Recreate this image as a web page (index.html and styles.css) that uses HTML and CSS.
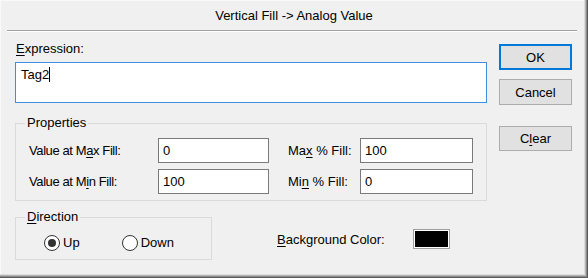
FILE: index.html
```html
<!DOCTYPE html>
<html lang="en">
<head>
  <meta charset="UTF-8">
  <title>Vertical Fill -> Analog Value</title>
  <link rel="stylesheet" href="styles.css">
</head>
<body>
  <div class="dialog">
    <!-- Title -->
    <div class="title">Vertical Fill -&gt; Analog Value</div>
    <div class="separator"></div>

    <div class="content">
      <!-- Left side -->
      <div class="main">
        <div class="label"><u>E</u>xpression:</div>
        <div class="expression">Tag2<span class="caret"></span></div>

        <fieldset class="group properties">
          <legend>Properties</legend>
          <div class="prop-grid">
            <span class="tight">Value at M<u>a</u>x Fill:</span>
            <div class="field">0</div>
            <span class="second">Ma<u>x</u> % Fill:</span>
            <div class="field">100</div>
            <span class="tight">Value at M<u>i</u>n Fill:</span>
            <div class="field">100</div>
            <span class="second">Mi<u>n</u> % Fill:</span>
            <div class="field">0</div>
          </div>
        </fieldset>

        <div class="bottom-row">
          <fieldset class="group direction">
            <legend><u>D</u>irection</legend>
            <div class="radios">
              <label class="radio"><span class="dot checked"></span>Up</label>
              <label class="radio"><span class="dot"></span>Down</label>
            </div>
          </fieldset>
          <div class="bg-color">
            <span><u>B</u>ackground Color:</span>
            <div class="swatch"></div>
          </div>
        </div>
      </div>

      <!-- Buttons -->
      <div class="buttons">
        <button class="default">OK</button>
        <button>Cancel</button>
        <button class="clear">C<u>l</u>ear</button>
      </div>
    </div>
  </div>
</body>
</html>
```

FILE: styles.css
```css
/* General Styles */
body {
  margin: 0;
  font-family: 'Liberation Sans', Arial, sans-serif;
  font-size: 13px;
  color: #000;
  background: #f0f0f0;
}

u {
  text-decoration: underline;
  text-underline-offset: 2px;
}

.dialog {
  width: 588px;
  height: 278px;
  box-sizing: border-box;
  background: #f0f0f0;
  box-shadow: inset -1px -1px #5a5a5a, inset -2px -2px #8a8a8a, inset -3px -3px #b4b4b4, inset -4px -4px #dcdcdc, inset 1px 1px #fafafa;
}

/* Title */
.title {
  height: 30px;
  line-height: 31px;
  text-align: center;
}

.separator {
  margin: 0 11px 0 7px;
  border-top: 1px solid #a0a0a0;
  border-bottom: 1px solid #fff;
}

.content {
  display: flex;
  gap: 12px;
  padding-left: 15px;
}

.main {
  width: 472px;
}

.label {
  margin-top: 9px;
  line-height: 16px;
  padding-left: 1px;
}

.expression {
  margin-top: 5px;
  height: 41px;
  box-sizing: border-box;
  border: 1px solid #3d8ee0;
  background: #fff;
  padding: 4px 5px;
  line-height: 16px;
}

.caret {
  display: inline-block;
  width: 1px;
  height: 15px;
  background: #000;
  vertical-align: -3px;
}

/* Group boxes */
.group {
  margin: 0;
  border: 1px solid #dadada;
  padding: 0;
}

.group legend {
  padding: 0 2px;
  margin-left: 9px;
  line-height: 14px;
}

.properties {
  margin-top: 13px;
  height: 85px;
  box-sizing: border-box;
}

.prop-grid {
  display: grid;
  grid-template-columns: 129px 111px 91px 113px;
  row-gap: 6px;
  align-items: center;
  padding: 8px 13px 0 13px;
}

.prop-grid span {
  white-space: nowrap;
}

.prop-grid .tight {
  letter-spacing: -0.4px;
}

.prop-grid .second {
  padding-left: 19px;
}

.field {
  height: 25px;
  box-sizing: border-box;
  border: 1px solid #7a7a7a;
  background: #fff;
  padding-left: 4px;
  line-height: 23px;
}

/* Direction + background */
.bottom-row {
  display: flex;
  align-items: flex-start;
  margin-top: 9px;
}

.direction {
  width: 197px;
  height: 50px;
  box-sizing: border-box;
}

.radios {
  display: flex;
  padding: 11px 0 0 28px;
  gap: 42px;
}

.radio {
  display: flex;
  align-items: center;
  gap: 3px;
  line-height: 16px;
}

.dot {
  width: 16px;
  height: 16px;
  box-sizing: border-box;
  border: 1px solid #333;
  border-radius: 50%;
  background: #fff;
  position: relative;
}

.dot.checked::after {
  content: '';
  position: absolute;
  left: 3px;
  top: 3px;
  width: 8px;
  height: 8px;
  border-radius: 50%;
  background: #333;
}

.bg-color {
  display: flex;
  align-items: center;
  margin: 19px 0 0 65px;
}

.bg-color span {
  width: 136px;
}

.swatch {
  width: 37px;
  height: 20px;
  box-sizing: border-box;
  border: 1px solid #a0a0a0;
  background: #000;
  box-shadow: inset 0 0 0 1px #fff;
}

/* Buttons */
.buttons {
  display: flex;
  flex-direction: column;
  gap: 9px;
  padding-top: 12px;
}

button {
  width: 73px;
  height: 26px;
  box-sizing: border-box;
  border: 1px solid #adadad;
  background: #e1e1e1;
  font: inherit;
  color: #000;
  padding: 0;
}

button.default {
  border: 2px solid #0078d7;
}

button.clear {
  margin-top: 12px;
  height: 25px;
}
```
